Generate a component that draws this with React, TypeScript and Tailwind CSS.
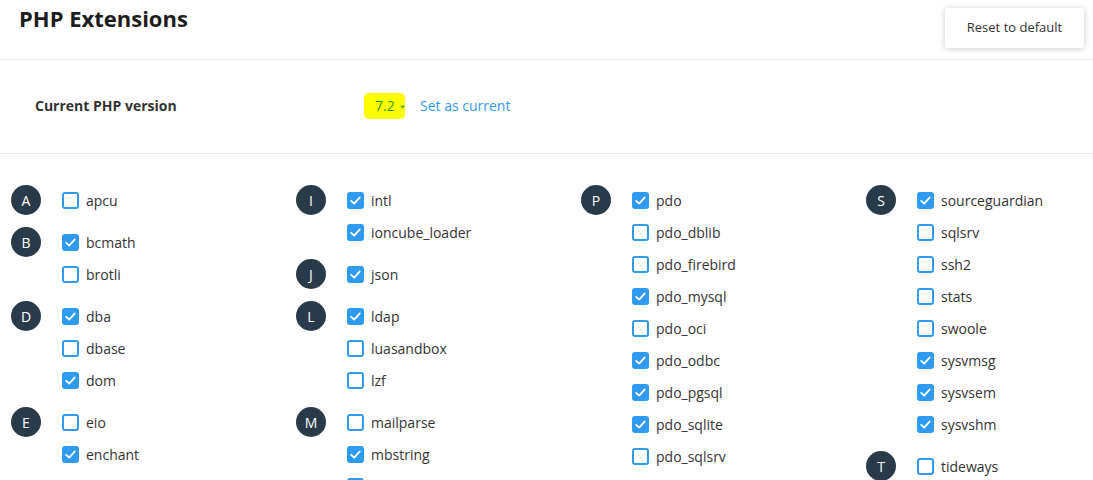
import React from 'react';

type Ext = { name: string; on: boolean };
type Group = { letter: string; items: Ext[] };

const columns: Group[][] = [
  [
    { letter: 'A', items: [{ name: 'apcu', on: false }] },
    { letter: 'B', items: [{ name: 'bcmath', on: true }, { name: 'brotli', on: false }] },
    { letter: 'D', items: [{ name: 'dba', on: true }, { name: 'dbase', on: false }, { name: 'dom', on: true }] },
    { letter: 'E', items: [{ name: 'eio', on: false }, { name: 'enchant', on: true }] },
  ],
  [
    { letter: 'I', items: [{ name: 'intl', on: true }, { name: 'ioncube_loader', on: true }] },
    { letter: 'J', items: [{ name: 'json', on: true }] },
    { letter: 'L', items: [{ name: 'ldap', on: true }, { name: 'luasandbox', on: false }, { name: 'lzf', on: false }] },
    { letter: 'M', items: [{ name: 'mailparse', on: false }, { name: 'mbstring', on: true }, { name: 'mcrypt', on: false }] },
  ],
  [
    {
      letter: 'P',
      items: [
        { name: 'pdo', on: true },
        { name: 'pdo_dblib', on: false },
        { name: 'pdo_firebird', on: false },
        { name: 'pdo_mysql', on: true },
        { name: 'pdo_oci', on: false },
        { name: 'pdo_odbc', on: true },
        { name: 'pdo_pgsql', on: true },
        { name: 'pdo_sqlite', on: true },
        { name: 'pdo_sqlsrv', on: false },
      ],
    },
  ],
  [
    {
      letter: 'S',
      items: [
        { name: 'sourceguardian', on: true },
        { name: 'sqlsrv', on: false },
        { name: 'ssh2', on: false },
        { name: 'stats', on: false },
        { name: 'swoole', on: false },
        { name: 'sysvmsg', on: true },
        { name: 'sysvsem', on: true },
        { name: 'sysvshm', on: true },
      ],
    },
    { letter: 'T', items: [{ name: 'tideways', on: false }] },
  ],
];

const Checkbox: React.FC<{ on: boolean }> = ({ on }) =>
  on ? (
    <span className="w-[17px] h-[17px] rounded-[3px] bg-[#2f9bf0] flex items-center justify-center shrink-0">
      <svg width="13" height="13" viewBox="0 0 13 13" fill="none">
        <polyline points="2.2,6.8 5.2,9.6 10.8,3.4" stroke="white" strokeWidth="1.8" strokeLinecap="round" strokeLinejoin="round" />
      </svg>
    </span>
  ) : (
    <span className="w-[17px] h-[17px] rounded-[3px] border-2 border-[#2f9bf0] bg-white shrink-0" />
  );

const App: React.FC = () => {
  return (
    <div className="font-['Open_Sans',sans-serif] text-[#333] bg-white w-[1093px] h-[480px] overflow-hidden">
      {/* Header */}
      <div className="flex justify-between items-start h-[60px] border-b border-[#e8e8e8]">
        <h1 className="pl-[19px] pt-[1px] text-[22px] leading-[34px] font-bold text-[#1d1d1d]">PHP Extensions</h1>
        <button className="mt-[8px] mr-[9px] w-[139px] h-[40px] bg-white rounded-[3px] shadow-[0_1px_6px_rgba(0,0,0,0.22)] text-[13px] text-[#333]">
          Reset to default
        </button>
      </div>

      {/* Version row */}
      <div className="flex items-center h-[94px] pb-[2px] border-b border-[#e8e8e8] pl-[35px]">
        <div className="w-[329px] text-[14px] font-bold text-[#333]">Current PHP version</div>
        <div className="flex items-center h-[26px] w-[41px] pl-[11px] bg-[#ffff00] rounded-[5px] text-[14px] text-[#2f9b00]">
          <span>7.2</span>
          <svg width="8" height="6" viewBox="0 0 8 6" className="ml-[5px] mt-[2px]">
            <polygon points="0.5,1 7.5,1 4,5" fill="#2f9b00" />
          </svg>
        </div>
        <a className="ml-[15px] text-[14px] text-[#2f9bf0]">Set as current</a>
      </div>

      {/* Extensions grid */}
      <div className="flex pt-[30px] pl-[11px]">
        {columns.map((col, ci) => (
          <div key={ci} className="w-[285px] shrink-0 flex flex-col gap-[10px]">
            {col.map((g) => (
              <div key={g.letter} className="flex">
                <div className="w-[51px] h-[32px] flex items-center shrink-0">
                  <span className="w-[30px] h-[30px] rounded-full bg-[#293a4a] text-white text-[14px] flex items-center justify-center">
                    {g.letter}
                  </span>
                </div>
                <ul className="flex flex-col">
                  {g.items.map((it) => (
                    <li key={it.name} className="h-[32px] flex items-center gap-[7px] text-[14px] text-[#333]">
                      <Checkbox on={it.on} />
                      <span>{it.name}</span>
                    </li>
                  ))}
                </ul>
              </div>
            ))}
          </div>
        ))}
      </div>
    </div>
  );
};

export default App;
